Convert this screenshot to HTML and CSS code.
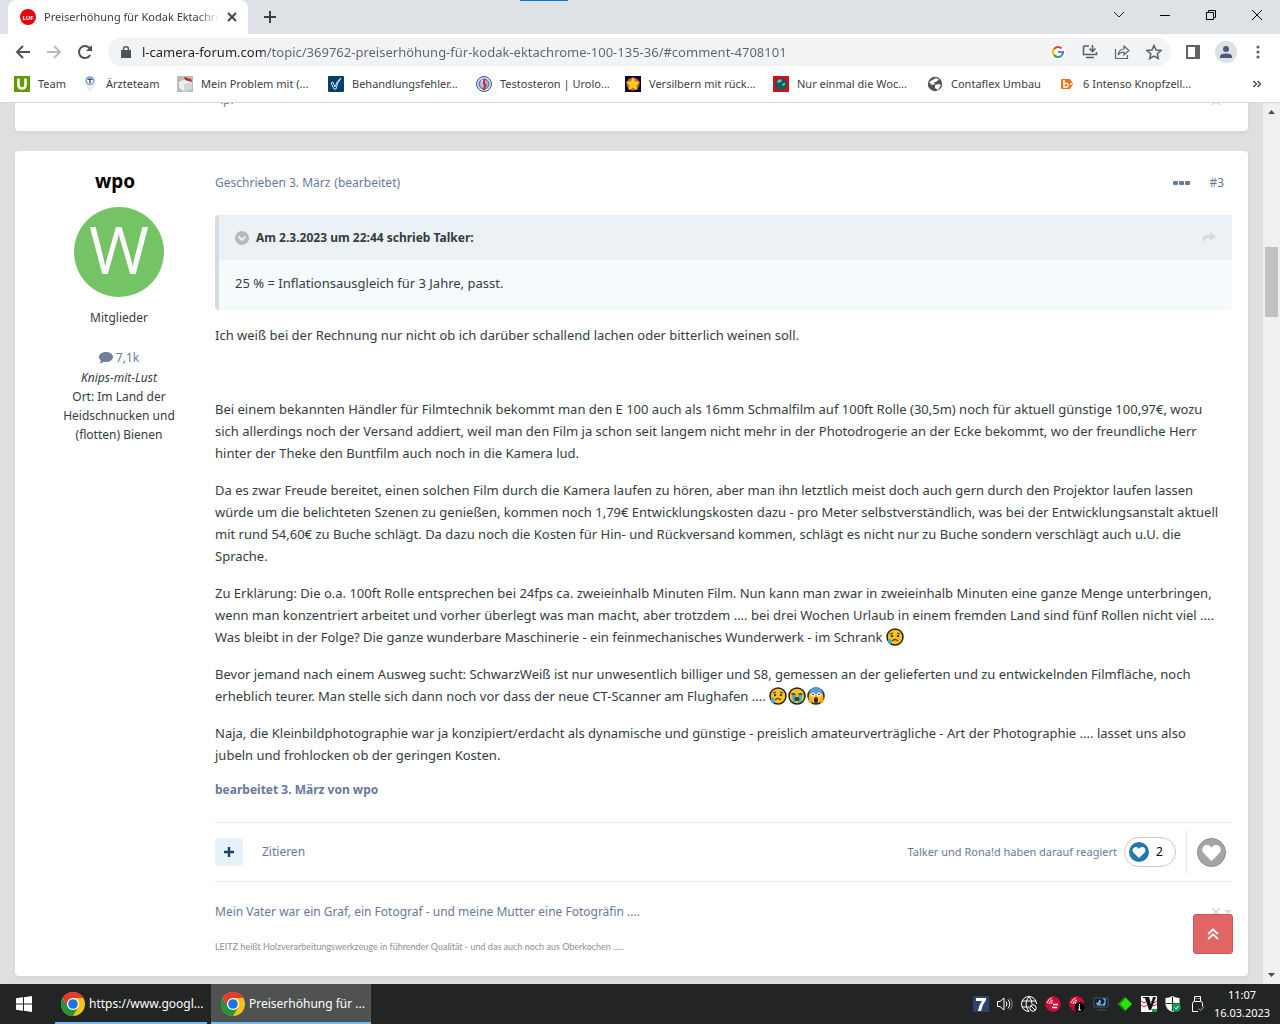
FILE: index.html
```html
<!DOCTYPE html>
<html lang="de">
<head>
<meta charset="utf-8">
<meta name="viewport" content="width=device-width, initial-scale=1">
<title>Preiserhöhung für Kodak Ektachrome</title>
<link rel="stylesheet" href="styles.css">
</head>
<body>
<svg class="defs" width="0" height="0" aria-hidden="true">
  <symbol id="chrome" viewBox="0 0 24 24">
    <circle cx="12" cy="12" r="12" fill="#fbc116"/>
    <path d="M1.600 6A12 12 0 0 1 22.400 6H12L6.800 15Z" fill="#e33b2e"/>
    <path d="M1.600 6A12 12 0 0 0 12 24L17.200 15 12 18 6.800 15Z" fill="#229342"/>
    <circle cx="12" cy="12" r="6" fill="#fff"/>
    <circle cx="12" cy="12" r="4.800" fill="#1a73e8"/>
  </symbol>
  <symbol id="heart" viewBox="0 0 20 18">
    <path d="M10 17L2 9C-1 5 2 1 5.500 1 8 1 9.300 2.500 10 4 10.700 2.500 12 1 14.500 1 18 1 21 5 18 9Z" fill="#fff"/>
  </symbol>
  <symbol id="sad" viewBox="0 0 18 18">
    <circle cx="9" cy="9" r="8" fill="#ffc21c" stroke="#222" stroke-width="1.500"/>
    <path d="M4 6l3-1M11 5l3 1M6 13q3-3 6 0" fill="none" stroke="#54400c" stroke-width="1.200"/>
    <circle cx="6" cy="8" r="1.200" fill="#43340b"/><circle cx="12" cy="8" r="1.200" fill="#43340b"/>
    <path d="M3.500 10q3 3 1.500 5.500-1.500 1-3-.5-.5-2 1.500-5z" fill="#27b3e6"/>
  </symbol>
</svg>

<header class="browser">
  <div class="tabstrip">
    <div class="tab">
      <svg width="16" height="16" viewBox="0 0 16 16"><circle cx="8" cy="8" r="8" fill="#e30613"/><text x="8" y="11" class="luf">LUF</text></svg>
      <span class="tab-title">Preiserhöhung für Kodak Ektachrome</span>
      <button class="plain" aria-label="Tab schließen"><svg width="10" height="10" viewBox="0 0 10 10"><path d="M1 1l8 8M9 1l-8 8" stroke="#3c4043" stroke-width="1.800"/></svg></button>
    </div>
    <button class="plain new-tab" aria-label="Neuer Tab"><svg width="12" height="12" viewBox="0 0 12 12"><path d="M6 0v12M0 6h12" stroke="#3c4043" stroke-width="2"/></svg></button>
    <div class="window-buttons">
      <button class="plain" aria-label="Tabs suchen"><svg width="12" height="12" viewBox="0 0 12 12"><path d="M1 3l5 5 5-5" fill="none" stroke="#222"/></svg></button>
      <button class="plain" aria-label="Minimieren"><svg width="12" height="12" viewBox="0 0 12 12"><path d="M1 6.500h10" stroke="#000"/></svg></button>
      <button class="plain" aria-label="Verkleinern"><svg width="12" height="12" viewBox="0 0 12 12"><path d="M1.500 3.500h7v7h-7zM3.500 3.500v-2h7v7h-2" fill="none" stroke="#000"/></svg></button>
      <button class="plain" aria-label="Schließen"><svg width="12" height="12" viewBox="0 0 12 12"><path d="M1 1l10 10M11 1L1 11" stroke="#000"/></svg></button>
    </div>
  </div>

  <div class="toolbar">
    <button class="plain" aria-label="Zurück"><svg width="16" height="16" viewBox="0 0 16 16"><path d="M15 8H2M8 2L2 8l6 6" fill="none" stroke="#4f5357" stroke-width="2"/></svg></button>
    <button class="plain" aria-label="Vorwärts"><svg width="16" height="16" viewBox="0 0 16 16"><path d="M1 8h13M8 2l6 6-6 6" fill="none" stroke="#b9bbbe" stroke-width="2"/></svg></button>
    <button class="plain" aria-label="Neu laden"><svg width="16" height="16" viewBox="0 0 16 16"><path d="M13.200 11A6 6 0 1 1 12.500 4L14 5.500" fill="none" stroke="#4f5357" stroke-width="2"/><path d="M15 1v6H9z" fill="#4f5357"/></svg></button>
    <div class="omnibox">
      <svg width="10" height="12" viewBox="0 0 10 12"><path d="M0 4h10v8H0z" fill="#4f5357"/><path d="M2.500 5V3a2.500 2.200 0 0 1 5 0v2" fill="none" stroke="#4f5357" stroke-width="1.500"/></svg>
      <input class="url" type="text" aria-label="Adresse" value="l-camera-forum.com/topic/369762-preiserhöhung-für-kodak-ektachrome-100-135-36/#comment-4708101">
      <button class="plain" aria-label="Google"><svg width="16" height="16" viewBox="0 0 16 16"><circle cx="8" cy="8" r="8" fill="#fff"/><g fill="none" stroke-width="2.200"><path d="M4 5A5 5 0 0 1 11.600 4.500" stroke="#ea4335"/><path d="M4 5a5 5 0 0 0 0 6" stroke="#fbbc05"/><path d="M4 11a5 5 0 0 0 7.600.5" stroke="#34a853"/><path d="M11.600 11.500A5 5 0 0 0 13 8H8" stroke="#4285f4"/></g></svg></button>
      <button class="plain" aria-label="Installieren"><svg width="16" height="16" viewBox="0 0 16 16"><path d="M7 2H2.500Q1.500 2 1.500 3v7.500h13V8M4 13.500h8" fill="none" stroke="#5f6368" stroke-width="1.600"/><path d="M10.500 1v6M7.500 4.500l3 3 3-3" fill="none" stroke="#5f6368" stroke-width="1.600"/></svg></button>
      <button class="plain" aria-label="Teilen"><svg width="16" height="16" viewBox="0 0 16 16"><path d="M1.500 5v9.500h12V11M4 11q1-6 6-6V2l5 4.500-5 4.500V8Q6 8 4 11z" fill="none" stroke="#5f6368" stroke-width="1.200"/></svg></button>
      <button class="plain" aria-label="Lesezeichen"><svg width="16" height="16" viewBox="0 0 16 16"><path d="M8 1.500l2 4.500 5 .5-3.800 3.200L12.300 14.500 8 12l-4.300 2.500 1.100-4.800L1 6.500 6 6z" fill="none" stroke="#5f6368" stroke-width="1.500"/></svg></button>
    </div>
    <button class="plain" aria-label="Seitenleiste"><svg width="14" height="14" viewBox="0 0 14 14"><path d="M1 1h12v12H1z" fill="none" stroke="#5f6368" stroke-width="2"/><path d="M9 1h5v12H9z" fill="#5f6368"/></svg></button>
    <button class="plain" aria-label="Profil"><svg width="22" height="22" viewBox="0 0 22 22"><circle cx="11" cy="11" r="11" fill="#dee1e6"/><circle cx="11" cy="8" r="3" fill="#4c5b78"/><path d="M5 17v-1.500q0-3 6-3t6 3V17z" fill="#4c5b78"/></svg></button>
    <button class="plain" aria-label="Menü"><svg width="12" height="14" viewBox="0 0 12 14"><g fill="#5f6368"><circle cx="6" cy="2" r="1.600"/><circle cx="6" cy="7" r="1.600"/><circle cx="6" cy="12" r="1.600"/></g></svg></button>
  </div>

  <nav class="bookmarks" aria-label="Lesezeichenleiste">
    <a href="#"><svg width="16" height="16" viewBox="0 0 16 16"><path d="M0 0h16v16H0z" fill="#5f9b00"/><path d="M4.500 2.500v6.500q0 3.500 3.500 3.500t3.500-3.500V2.500" fill="none" stroke="#fff" stroke-width="2.600"/></svg><span>Team</span></a>
    <a href="#"><svg width="16" height="16" viewBox="0 0 16 16"><path d="M3 5q0-4.500 5-4.500T13 5q0 4-5 10.500Q3 9 3 5z" fill="#f0f0f2" stroke="#d5d7da" stroke-width=".6"/><circle cx="8" cy="4.700" r="3.800" fill="#fff" stroke="#4e86bd"/><path d="M5.700 3.200h4.600M8 3.200v4" stroke="#1e4f94" stroke-width="1.400"/></svg><span>Ärzteteam</span></a>
    <a href="#"><svg width="16" height="16" viewBox="0 0 16 16"><path d="M0 0h16v16H0z" fill="#b9bcba"/><path d="M2 6l6-3 7 3v7l-8 2.500L2 12z" fill="#eef0ef"/><path d="M7 8l8-2v7l-8 2.500z" fill="#d3d6d4"/><path d="M7 1l7 2 1 3-7-2z" fill="#c82423"/></svg><span>Mein Problem mit (...</span></a>
    <a href="#"><svg width="16" height="16" viewBox="0 0 16 16"><rect width="16" height="16" rx="1" fill="#073e6a"/><path d="M3 7l2-1 2 5Q9 4 13 2q-4 5-5 11H6z" fill="none" stroke="#d8e9f4"/></svg><span>Behandlungsfehler...</span></a>
    <a href="#"><svg width="16" height="16" viewBox="0 0 16 16"><circle cx="8" cy="8" r="7.500" fill="#dbe2ee" stroke="#3c5787"/><circle cx="8" cy="8" r="5" fill="#9fb3d1" stroke="#486798"/><path d="M6.500 3.500v5" stroke="#fff" stroke-width="1.500"/><path d="M8.500 3l-1 4 2 2-2 5" fill="none" stroke="#d42130" stroke-width="2"/></svg><span>Testosteron | Urolo...</span></a>
    <a href="#"><svg width="16" height="16" viewBox="0 0 16 16"><path d="M0 0h16v16H0z" fill="#060544"/><circle cx="8" cy="8" r="6.500" fill="#e9680d"/><path d="M8 1l2 4.500 5 .5-3.800 3.300 1.300 5L8 11.500l-4.500 2.800 1.300-5L1 6l5-.5z" fill="#ffd02b"/></svg><span>Versilbern mit rück...</span></a>
    <a href="#"><svg width="16" height="16" viewBox="0 0 16 16"><path d="M0 0h16v16H0z" fill="#d90c16"/><circle cx="8" cy="8" r="6" fill="#075f60"/><path d="M4 6q2-4 5-2l-1 2-3 1zM9 8l3-1v2l-2 1z" fill="#80bbb0"/></svg><span>Nur einmal die Woc...</span></a>
    <a href="#"><svg width="16" height="16" viewBox="0 0 16 16"><circle cx="8" cy="8" r="7.200" fill="#505459"/><path d="M9 2l3 1.500L9 6 7 6l1 2-3 1-3-3M8 9l4-1 2 1-3 5-3-2z" fill="#fff"/></svg><span>Contaflex Umbau</span></a>
    <a href="#"><svg width="16" height="16" viewBox="0 0 16 16"><path d="M3 3h8l3 5-3 5H3q-1 0-1-1V4q0-1 1-1z" fill="#f36c16"/><path d="M5 4v7.500M5 8q4-2 4 1t-4 2" fill="none" stroke="#fff" stroke-width="1.500"/><circle cx="12" cy="8" r="1" fill="#fff"/></svg><span>6 Intenso Knopfzell...</span></a>
    <button class="plain" aria-label="Weitere Lesezeichen"><svg width="8" height="8" viewBox="0 0 8 8"><path d="M.5 1l3 3-3 3M4.500 1l3 3-3 3" fill="none" stroke="#4f5357" stroke-width="1.600"/></svg></button>
  </nav>
</header>

<div class="viewport">
  <main class="page">
    <section class="card card-previous" aria-label="Vorheriger Beitrag">
      <span>ipr</span>
      <button class="plain pale" aria-label="Signatur ausblenden"><svg width="10" height="8" viewBox="0 0 10 8"><path d="M1 0l8 8M9 0L1 8" stroke="#d9dde6" stroke-width="2"/></svg></button>
    </section>

    <article class="card post">
      <aside class="author">
        <h3><a href="#">wpo</a></h3>
        <div class="author-details">
          <svg class="avatar" width="90" height="90" viewBox="0 0 90 90"><circle cx="45" cy="45" r="45" fill="#74c365"/><text x="45" y="67">W</text></svg>
          <p class="group">Mitglieder</p>
          <a class="count" href="#"><svg width="14" height="12" viewBox="0 0 14 12"><path d="M7 0c4 0 7 2.200 7 5s-3 5-7 5q-1.500 0-2.500-.3Q3 11.500.5 11.500 2 10 1.800 8.500 0 7 0 5c0-2.800 3-5 7-5z" fill="#6e7f9b"/></svg> 7,1k</a>
          <p><em>Knips-mit-Lust</em></p>
          <p>Ort: Im Land der<br>Heidschnucken und<br>(flotten) Bienen</p>
        </div>
      </aside>

      <div class="post-body">
        <div class="meta">
          <a href="#">Geschrieben 3. März</a>
          <span>(bearbeitet)</span>
          <button class="plain more" aria-label="Optionen"><svg width="17" height="4" viewBox="0 0 17 4"><g fill="#68799a"><rect width="5" height="4" rx="1"/><rect x="6" width="5" height="4" rx="1"/><rect x="12" width="5" height="4" rx="1"/></g></svg></button>
          <a href="#">#3</a>
        </div>

        <blockquote class="quote">
          <div class="quote-head">
            <svg width="14" height="14" viewBox="0 0 14 14"><circle cx="7" cy="7" r="7" fill="#b3b8bd"/><path d="M3.500 5.500L7 9l3.500-3.500" fill="none" stroke="#edf1f5" stroke-width="2"/></svg>
            <strong>Am 2.3.2023 um 22:44 schrieb Talker:</strong>
            <a href="#" aria-label="Zum Beitrag"><svg width="14" height="12" viewBox="0 0 14 12"><path d="M8 0l6 4.500L8 9V6Q2 5 1.500 11.500-2 3 8 3z" fill="#d5dadf"/></svg></a>
          </div>
          <p>25 % = Inflationsausgleich für 3 Jahre, passt.</p>
        </blockquote>

        <div class="text">
          <p>Ich weiß bei der Rechnung nur nicht ob ich darüber schallend lachen oder bitterlich weinen soll.</p>
          <p>&nbsp;</p>
          <p>Bei einem bekannten Händler für Filmtechnik bekommt man den E 100 auch als 16mm Schmalfilm auf 100ft Rolle (30,5m) noch für aktuell günstige 100,97€, wozu<br>sich allerdings noch der Versand addiert, weil man den Film ja schon seit langem nicht mehr in der Photodrogerie an der Ecke bekommt, wo der freundliche Herr<br>hinter der Theke den Buntfilm auch noch in die Kamera lud.</p>
          <p>Da es zwar Freude bereitet, einen solchen Film durch die Kamera laufen zu hören, aber man ihn letztlich meist doch auch gern durch den Projektor laufen lassen<br>würde um die belichteten Szenen zu genießen, kommen noch 1,79€ Entwicklungskosten dazu - pro Meter selbstverständlich, was bei der Entwicklungsanstalt aktuell<br>mit rund 54,60€ zu Buche schlägt. Da dazu noch die Kosten für Hin- und Rückversand kommen, schlägt es nicht nur zu Buche sondern verschlägt auch u.U. die<br>Sprache.</p>
          <p>Zu Erklärung: Die o.a. 100ft Rolle entsprechen bei 24fps ca. zweieinhalb Minuten Film. Nun kann man zwar in zweieinhalb Minuten eine ganze Menge unterbringen,<br>wenn man konzentriert arbeitet und vorher überlegt was man macht, aber trotzdem .... bei drei Wochen Urlaub in einem fremden Land sind fünf Rollen nicht viel ....<br>Was bleibt in der Folge? Die ganze wunderbare Maschinerie - ein feinmechanisches Wunderwerk - im Schrank <svg class="emoji" width="18" height="18"><use href="#sad"/></svg></p>
          <p>Bevor jemand nach einem Ausweg sucht: SchwarzWeiß ist nur unwesentlich billiger und S8, gemessen an der gelieferten und zu entwickelnden Filmfläche, noch<br>erheblich teurer. Man stelle sich dann noch vor dass der neue CT-Scanner am Flughafen .... <span class="emojis"><svg class="emoji" width="18" height="18"><use href="#sad"/></svg><svg class="emoji" width="18" height="18" viewBox="0 0 18 18"><circle cx="9" cy="9" r="8" fill="#ffc21c" stroke="#222" stroke-width="1.500"/><path d="M4 8h4v8l-3-1zM10 8h4l-1 7-3 1z" fill="#27b3e6"/><path d="M3.500 7h4M10.500 7h4" stroke="#43340b" stroke-width="1.500"/><ellipse cx="9" cy="12" rx="2.500" ry="2" fill="#54300c"/></svg><svg class="emoji" width="18" height="18" viewBox="0 0 18 18"><circle cx="9" cy="9" r="8" fill="#ffc21c" stroke="#222" stroke-width="1.500"/><path d="M2 7a7 7 0 0 1 14 0z" fill="#5899df"/><circle cx="6" cy="7.500" r="2" fill="#fff"/><circle cx="12" cy="7.500" r="2" fill="#fff"/><circle cx="6" cy="7.500" r=".8"/><circle cx="12" cy="7.500" r=".8"/><ellipse cx="9" cy="13" rx="2" ry="3" fill="#33210b"/><path d="M1.500 10l3 2v5l-3-2zM16.500 10l-3 2v5l3-2z" fill="#f2a51a"/></svg></span></p>
          <p>Naja, die Kleinbildphotographie war ja konzipiert/erdacht als dynamische und günstige - preislich amateurverträgliche - Art der Photographie .... lasset uns also<br>jubeln und frohlocken ob der geringen Kosten.</p>
        </div>
        <strong class="edited">bearbeitet 3. März von wpo</strong>

        <div class="actions">
          <button class="multiquote" aria-label="Mehrfachzitat"><svg width="10" height="10" viewBox="0 0 10 10"><path d="M5 0v10M0 5h10" stroke="#0f4573" stroke-width="2.400"/></svg></button>
          <a href="#">Zitieren</a>
          <a class="reacted" href="#">Talker und Rona!d haben darauf reagiert</a>
          <button class="reactions"><svg width="20" height="20" viewBox="0 0 20 20"><circle cx="10" cy="10" r="10" fill="#2676a7"/><use href="#heart" x="3" y="4" width="14" height="13"/></svg>2</button>
          <div class="react"><button class="plain" aria-label="Gefällt mir"><svg width="29" height="29" viewBox="0 0 29 29"><circle cx="14.500" cy="14.500" r="14" fill="#a5a5a5" stroke="#8b8b8b"/><use href="#heart" x="4.500" y="6" width="20" height="18"/></svg></button></div>
        </div>

        <footer class="signature">
          <p>Mein Vater war ein Graf, ein Fotograf - und meine Mutter eine Fotogräfin ....</p>
          <button class="plain pale" aria-label="Signatur"><svg width="20" height="8" viewBox="0 0 20 8"><path d="M0 0l8 8M8 0L0 8" stroke="#d9dde6" stroke-width="2"/><path d="M12 2h8l-4 4z" fill="#d9dde6"/></svg></button>
          <p class="small">LEITZ heißt Holzverarbeitungswerkzeuge in führender Qualität - und das auch noch aus Oberkochen .....</p>
        </footer>
      </div>
    </article>
    <a class="to-top" href="#" aria-label="Nach oben"><svg width="12" height="12" viewBox="0 0 12 12"><path d="M1 6l5-4.500L11 6M1 11l5-4.500 5 4.500" fill="none" stroke="#fff" stroke-width="1.800"/></svg></a>
  </main>
  <div class="scrollbar" aria-hidden="true">
    <svg width="17" height="17" viewBox="0 0 17 17"><path d="M5 11h7L8.500 7z" fill="#4d4d4d"/></svg>
    <div class="track"><div class="thumb"></div></div>
    <svg width="17" height="17" viewBox="0 0 17 17"><path d="M5 6h7l-3.500 4z" fill="#4d4d4d"/></svg>
  </div>
</div>

<footer class="taskbar">
  <button class="plain start" aria-label="Start"><svg width="16" height="16" viewBox="0 0 16 16"><path d="M0 2.300l7-1v6.200H0zM8 1.200L16 0v7.500H8zM0 8.500h7v6.200l-7-1zM8 8.500h8V16l-8-1.200z" fill="#fff"/></svg></button>
  <button class="task"><svg width="24" height="24"><use href="#chrome"/></svg><span>https://www.googl...</span></button>
  <button class="task task-active"><svg width="24" height="24"><use href="#chrome"/></svg><span>Preiserhöhung für ...</span></button>
  <div class="tray">
    <svg width="16" height="16" viewBox="0 0 16 16"><path d="M0 0h16v16H0z" fill="#2d4270"/><path d="M3 2h10v2Q9 9 8 15H5q1-6 4-10H3z" fill="#fff"/></svg>
    <svg width="16" height="16" viewBox="0 0 16 16"><path d="M.5 5.500h2.500l4-3.500v12l-4-3.500H.5z" fill="none" stroke="#fff"/><path d="M9 5.500q2 2.500 0 5M11 3.500q3.500 4.500 0 9" fill="none" stroke="#fff"/><path d="M13 2q4.500 6 0 12" fill="none" stroke="#888"/></svg>
    <svg width="16" height="16" viewBox="0 0 16 16"><path d="M8 .5a7.500 7.500 0 1 0 0 15M8 .5A7.500 7.500 0 0 1 15.500 8M8 .5Q2 8 8 15.500M8 .5q3 3.500 3 7.500M1 5h14M1 11h7" fill="none" stroke="#fff"/><circle cx="12" cy="12" r="3.200" fill="#232524" stroke="#fff"/><path d="M10 10l4 4" stroke="#fff"/></svg>
    <svg width="16" height="16" viewBox="0 0 16 16"><circle cx="8" cy="8" r="7.700" fill="#cb0d36"/><path d="M2 7q1-4 5-5M4 8q0-3 4-4M6 8q0-2 2-2" fill="none" stroke="#fff" stroke-width=".9"/><path d="M8 8.500h5M7 11.500h5" stroke="#fff" stroke-width="1.300"/></svg>
    <svg width="16" height="16" viewBox="0 0 16 16"><circle cx="7.500" cy="7.500" r="7.500" fill="#cb0d36"/><path d="M2 7q1-4 5-5M4 8q0-3 4-4M6 8q0-2 2-2" fill="none" stroke="#fff" stroke-width=".9"/><circle cx="10.500" cy="11" r="5" fill="#000"/><path d="M10.500 8v1.500M9.500 10.500h1V14M9 14h3" fill="none" stroke="#fff"/></svg>
    <svg width="16" height="16" viewBox="0 0 16 16"><path d="M1 2h14v9H1z" fill="#071f3b" stroke="#555"/><path d="M3 7l2 1 2-4v5M10 3h2v5h-2M4 9h8" fill="none" stroke="#8ac4ec" stroke-width="1.200"/><path d="M4 14h9" stroke="#355887"/></svg>
    <svg width="16" height="16" viewBox="0 0 16 16"><path d="M8 1l7 7-7 7-7-7z" fill="#29e500"/><path d="M8 1l-7 7 7 7v-2L3 8l5-5z" fill="#168600"/></svg>
    <svg width="16" height="16" viewBox="0 0 16 16"><path d="M0 0h16v16H0z" fill="#f5f5f5"/><path d="M0 5l3 2 3-2M0 9l3 2 3-2M10 5l3 2 3-2M10 9l3 1 3-2" stroke="#cb2432" fill="none"/><path d="M2 1h6l2 7 2-7h3l-5 13H8L4 2H2z" fill="#111"/><path d="M11 13h5v3h-5z" fill="#189c48"/></svg>
    <svg width="16" height="16" viewBox="0 0 16 16"><path d="M7.500 0q3 2 7 2v6q0 5-7 8-7-3-7-8V2q4 0 7-2z" fill="#fff"/><path d="M7.500 1v14M1 7.500h13" stroke="#232524" stroke-width="1.200"/><circle cx="11.500" cy="11.500" r="4.200" fill="#189e58"/><path d="M9.500 11.500l1.500 1.500 2.500-3" fill="none" stroke="#fff"/></svg>
    <svg width="16" height="16" viewBox="0 0 16 16"><path d="M5.500 5V.5h6V5M3.500 15.500v-8q0-2 2-2h6q2 0 2 2v3M3.500 15.500H9M7 2v1M10 2v1" fill="none" stroke="#fff"/><path d="M9.500 12.500l2 2 3.500-4" fill="none" stroke="#aaa"/></svg>
  </div>
  <time class="clock">11:07<br>16.03.2023</time>
</footer>
</body>
</html>
```
FILE: styles.css
```css
* { box-sizing: border-box; }

body {
  margin: 0;
  min-height: 100vh;
  display: flex;
  flex-direction: column;
  font-family: "Noto Sans", "Open Sans", sans-serif;
  font-size: 12px;
  line-height: 20px;
  color: #353c41;
  background: #dfdfdf;
}

p, h3, blockquote { margin: 0; }
a { color: inherit; text-decoration: none; }
svg { flex: none; display: block; }
button { font: inherit; color: inherit; cursor: pointer; }
.defs { position: absolute; }
.plain {
  flex: none;
  display: flex;
  align-items: center;
  justify-content: center;
  padding: 0;
  border: 0;
  background: none;
}

/* Browser window */
.browser {
  flex: none;
  background: #fff;
  border-bottom: 1px solid #d5d7da;
  font-size: 11px;
}
.tabstrip {
  position: relative;
  display: flex;
  height: 34px;
  background: #dee1e6;
}
.tabstrip::before {
  content: "";
  position: absolute;
  top: 0;
  left: 520px;
  width: 48px;
  height: 1px;
  background: #0078d4;
}
.tab {
  display: flex;
  align-items: center;
  gap: 8px;
  width: 240px;
  margin-left: 8px;
  padding: 0 11px 0 12px;
  background: #fff;
  border-radius: 8px 8px 0 0;
}
.tab-title {
  flex: 1;
  overflow: hidden;
  white-space: nowrap;
  -webkit-mask-image: linear-gradient(90deg, #000 88%, transparent);
  mask-image: linear-gradient(90deg, #000 88%, transparent);
}
.luf {
  font: bold 6px "Open Sans", sans-serif;
  text-anchor: middle;
  fill: #fff;
}
.new-tab { width: 44px; }
.window-buttons {
  display: flex;
  margin-left: auto;
}
.window-buttons .plain { width: 46px; height: 29px; }
.toolbar {
  display: flex;
  align-items: center;
  gap: 15px;
  height: 36px;
  padding: 0 16px 0 15px;
}
.omnibox {
  flex: 1;
  display: flex;
  align-items: center;
  gap: 16px;
  height: 28px;
  padding: 0 9px 0 13px;
  border-radius: 14px;
  background: #f1f3f4;
}
.url {
  flex: 1;
  min-width: 0;
  margin-left: -5px;
  padding: 0;
  border: 0;
  font: 13px "Noto Sans", "Open Sans", sans-serif;
  color: transparent;
  background: linear-gradient(90deg, #202124 123px, #5f6368 123px);
  -webkit-background-clip: text;
  background-clip: text;
}
.bookmarks {
  display: grid;
  grid-template-columns: 68px 95px 151px 148px 149px 148px 154px 132px 1fr auto;
  align-items: center;
  height: 32px;
  padding: 0 19px 4px 14px;
  color: #3c4043;
}
.bookmarks a {
  display: flex;
  align-items: center;
  gap: 8px;
  white-space: nowrap;
}

/* Forum page */
.viewport {
  flex: 1;
  display: flex;
}
.page {
  position: relative;
  flex: 1;
  min-width: 0;
  padding: 0 15px 7px;
}
.card {
  background: #fff;
  border-radius: 4px;
  box-shadow: 0 2px 4px rgba(0, 0, 0, .06);
}
.card-previous {
  display: flex;
  justify-content: space-between;
  height: 28px;
  padding: 0 27px 0 205px;
  margin-bottom: 20px;
  border-radius: 0 0 4px 4px;
  overflow: hidden;
  color: #68799a;
}
.card-previous span { margin-top: -13px; }
.card-previous .plain { height: 8px; margin-top: -6px; }
.post { display: flex; }
.author {
  flex: none;
  width: 200px;
  padding-top: 20px;
  line-height: 19px;
  text-align: center;
}
.author h3 {
  font-size: 19px;
  line-height: 20px;
  color: #000;
}
.author-details { padding: 16px 0 0 8px; }
.avatar { margin: 0 auto; }
.avatar text {
  font: 65px "Open Sans", sans-serif;
  text-anchor: middle;
  fill: #fff;
}
.group { margin: 11px 0 21px; }
.count {
  display: flex;
  align-items: center;
  justify-content: center;
  gap: 3px;
  line-height: 20px;
  color: #68799a;
}
.post-body {
  flex: 1;
  min-width: 0;
  padding: 20px 16px 19px 0;
}
.meta {
  display: flex;
  align-items: center;
  gap: 4px;
  height: 24px;
  margin-bottom: 20px;
  padding-right: 8px;
  color: #68799a;
}
.more { margin: 0 15px 0 auto; }
.quote {
  border-left: 4px solid #d5dbe0;
  border-radius: 4px;
  background: #f5fafd;
  font-size: 13px;
}
.quote-head {
  display: flex;
  align-items: center;
  gap: 7px;
  height: 45px;
  padding: 0 16px;
  background: #ecf1f5;
  font-size: 12px;
}
.quote-head a { margin-left: auto; }
.quote p { padding: 12px 16px 16px; line-height: 22px; }
.text {
  margin: 14px 0 13px;
  font-size: 13px;
  line-height: 22px;
  white-space: nowrap;
}
.text p + p { margin-top: 15px; }
.emojis { display: inline-flex; gap: 1px; vertical-align: -4px; }
.emoji { display: inline-block; vertical-align: -4px; }
.edited {
  display: block;
  line-height: 22px;
  margin-bottom: 21px;
  color: #68799a;
}
.actions {
  display: flex;
  align-items: center;
  height: 60px;
  border-top: 1px solid #e8e9eb;
  border-bottom: 1px solid #e8e9eb;
  color: #68799a;
}
.multiquote {
  display: grid;
  place-items: center;
  width: 28px;
  height: 28px;
  margin-right: 19px;
  padding: 0;
  border: 0;
  border-radius: 4px;
  background: #e7f1fa;
}
.reacted { margin-left: auto; font-size: 11px; }
.reactions {
  display: flex;
  align-items: center;
  gap: 7px;
  width: 52px;
  height: 30px;
  margin: 0 10px 0 7px;
  padding: 0 4px;
  border: 1px solid #c3c9d6;
  border-radius: 15px;
  background: #fff;
  color: #000;
}
.react {
  display: flex;
  align-items: center;
  height: 42px;
  padding: 0 6px 0 10px;
  border-left: 1px solid #e8e9eb;
}
.signature {
  display: grid;
  grid-template-columns: 1fr auto;
  align-items: center;
  row-gap: 15px;
  padding-top: 20px;
  color: #68799a;
}
.small { font-family: Lato, sans-serif; font-size: 9px; color: #8e8e8e; }
.to-top {
  position: absolute;
  right: 30px;
  bottom: 30px;
  display: grid;
  place-items: center;
  width: 40px;
  height: 40px;
  border: 1px solid #ca5757;
  border-radius: 3px;
  background: #e06666;
}
.scrollbar {
  flex: none;
  display: flex;
  flex-direction: column;
  width: 17px;
  background: #f0f0f0;
}
.track {
  flex: 1;
  display: grid;
  grid-template-rows: 127fr 70fr 650fr;
}
.thumb {
  grid-row: 2;
  margin: 0 2px;
  background: #c1c1c1;
}

/* Windows taskbar */
.taskbar {
  flex: none;
  display: flex;
  align-items: stretch;
  height: 40px;
  background: #232524;
  color: #fff;
}
.start { width: 48px; margin-right: 7px; }
.task {
  display: flex;
  align-items: center;
  gap: 4px;
  width: 152px;
  margin-right: 4px;
  padding: 2px 6px 0;
  border: 0;
  border-bottom: 2px solid #76b9ed;
  background: none;
  white-space: nowrap;
}
.task-active {
  width: 160px;
  padding-left: 10px;
  background: #505251;
}
.tray {
  display: flex;
  align-items: center;
  gap: 8px;
  margin-left: auto;
}
.clock {
  width: 58px;
  margin: 2px 9px 0 8px;
  font-size: 11px;
  line-height: 18px;
  text-align: center;
}
```
